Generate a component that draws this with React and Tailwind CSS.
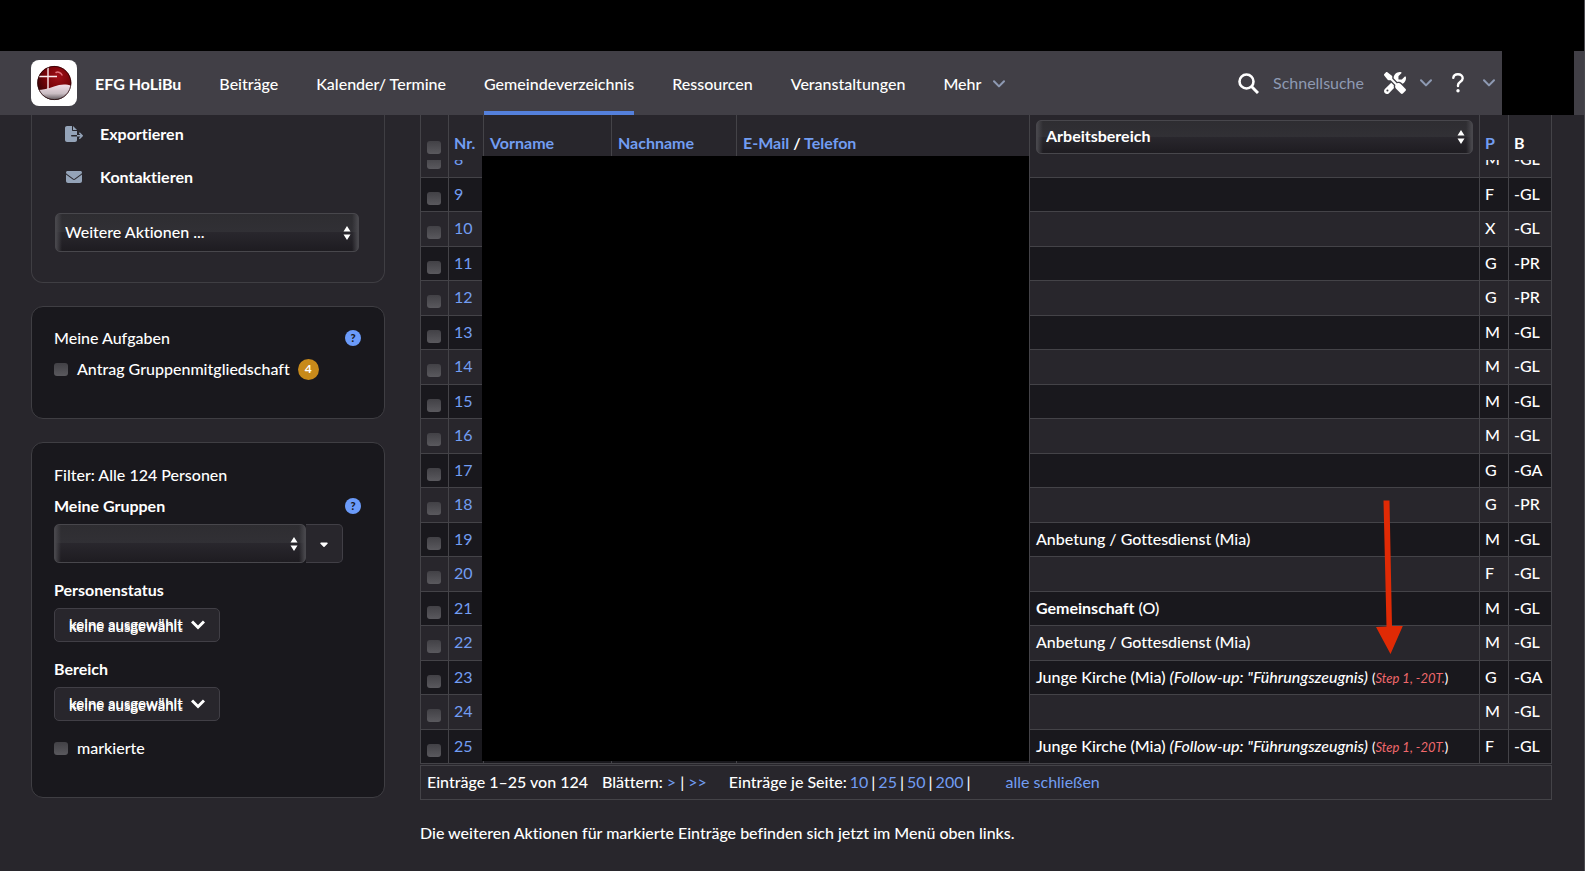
import { useState } from "react";
import { FaFileExport, FaEnvelope, FaScrewdriverWrench, FaCaretDown } from "react-icons/fa6";

const navItems = ["Beiträge", "Kalender/ Termine", "Gemeindeverzeichnis", "Ressourcen", "Veranstaltungen"];

const rows = [
    { nr: 9, p: "F", b: "-GL" },
    { nr: 10, p: "X", b: "-GL" },
    { nr: 11, p: "G", b: "-PR" },
    { nr: 12, p: "G", b: "-PR" },
    { nr: 13, p: "M", b: "-GL" },
    { nr: 14, p: "M", b: "-GL" },
    { nr: 15, p: "M", b: "-GL" },
    { nr: 16, p: "M", b: "-GL" },
    { nr: 17, p: "G", b: "-GA" },
    { nr: 18, p: "G", b: "-PR" },
    { nr: 19, area: "Anbetung / Gottesdienst", role: "(Mia)", p: "M", b: "-GL" },
    { nr: 20, p: "F", b: "-GL" },
    { nr: 21, area: "Gemeinschaft", role: "(O)", lead: true, p: "M", b: "-GL" },
    { nr: 22, area: "Anbetung / Gottesdienst", role: "(Mia)", p: "M", b: "-GL" },
    { nr: 23, area: "Junge Kirche", role: "(Mia)", followUp: true, p: "G", b: "-GA" },
    { nr: 24, p: "M", b: "-GL" },
    { nr: 25, area: "Junge Kirche", role: "(Mia)", followUp: true, p: "F", b: "-GL" },
];

const Chevron = () => (
    <svg viewBox="0 0 12 8" className="h-2 w-3 shrink-0" fill="none" stroke="#8e9ab3" strokeWidth="2" strokeLinecap="round" strokeLinejoin="round" aria-hidden="true">
        <path d="M1 1.2 6 6.4 11 1.2" />
    </svg>
);

const Logo = () => (
    <svg viewBox="0 0 46 46" className="size-[46px] shrink-0" role="img" aria-label="EFG HoLiBu">
        <defs>
            <radialGradient id="ball" cx="0.6" cy="0.3" r="0.75">
                <stop offset="0" stopColor="#a01018" />
                <stop offset="0.45" stopColor="#7c0409" />
                <stop offset="1" stopColor="#2a0204" />
            </radialGradient>
            <linearGradient id="snow" x1="0" y1="0" x2="0" y2="1">
                <stop offset="0" stopColor="#f3dfe8" />
                <stop offset="0.55" stopColor="#c9bcc2" />
                <stop offset="1" stopColor="#4a4246" />
            </linearGradient>
            <clipPath id="round">
                <circle cx="23.3" cy="23" r="17" />
            </clipPath>
        </defs>
        <rect width="46" height="46" rx="8" fill="#fff" />
        <g clipPath="url(#round)">
            <rect x="6" y="6" width="35" height="35" fill="url(#ball)" />
            <path d="M6 30C12 30 17 28.5 23 26.5C29 24.5 34 23.5 41 26V41H6Z" fill="url(#snow)" />
            <path d="M17 7V29M8 16.5H26" stroke="#fbe9ec" strokeWidth="1.4" />
            <path d="M25 12.5C27 11.5 30 12.5 31 15" fill="none" stroke="#e2727c" strokeWidth="1.5" strokeLinecap="round" />
        </g>
        <circle cx="23.3" cy="23" r="16.6" fill="none" stroke="#200305" strokeOpacity="0.7" strokeWidth="1" />
    </svg>
);

const HelpButton = ({ label }) => (
    <button type="button" aria-label={label} className="flex size-4 items-center justify-center rounded-full bg-[#6b9bfa] text-[11px] leading-4 font-black text-[#19181d]">
        ?
    </button>
);

const Checkbox = ({ id, label }) => (
    <input
        type="checkbox"
        id={id}
        aria-label={label}
        className="block h-[13px] w-3.5 shrink-0 appearance-none rounded-[3px] bg-linear-to-b from-[#424146] to-[#5a595e] checked:from-[#6b9bfa] checked:to-[#4f7cd8]"
    />
);

const Select = ({ id, label, children, height, bold }) => (
    <div className="relative w-full">
        <select
            id={id}
            aria-label={label}
            className={`block w-full appearance-none rounded-[5px] border border-[#48474c] bg-[linear-gradient(to_right,#49484d,transparent_6px,transparent_calc(100%-6px),#49484d),linear-gradient(to_bottom,#2e2d31,#313035_50%,#29272d_50%,#1e1c21)] px-[9px] pb-0.5 text-base ${height} ${bold ? "font-bold" : "font-medium"}`}
        >
            {children}
        </select>
        <svg viewBox="0 0 8 14" className="pointer-events-none absolute top-1/2 right-2 h-3.5 w-2 -translate-y-1/2" fill="#fff" aria-hidden="true">
            <path d="M4 0 7.5 5.5H.5ZM4 14 7.5 8.5H.5Z" />
        </svg>
    </div>
);

const MultiSelectButton = ({ id }) => (
    <button type="button" id={id} className="flex h-[34px] w-[166px] items-center justify-between rounded-[5px] border border-[#413f46] bg-[#28262c] px-3.5 text-[15px] font-medium">
        <span className="pb-px [text-shadow:0_2px_0_#fff]">keine ausgewählt</span>
        <svg viewBox="0 0 14 10" className="h-2.5 w-3.5" fill="none" stroke="#fff" strokeWidth="3" strokeLinejoin="miter" aria-hidden="true">
            <path d="M1 1.5 7 7.5 13 1.5" />
        </svg>
    </button>
);

const Header = () => (
    <header className="flex h-16 shrink-0 items-stretch bg-[#413f46] pl-[31px]">
        <a href="#" className="flex items-center gap-[18px] font-bold">
            <Logo />
            <span className="pt-0.5">EFG HoLiBu</span>
        </a>
        <nav className="ml-[38px] flex gap-[38px]">
            {navItems.map((item) => (
                <a
                    key={item}
                    href="#"
                    className={`flex items-center border-y-4 border-transparent pt-0.5 font-medium whitespace-nowrap ${item === "Gemeindeverzeichnis" ? "border-b-[#5480dc]" : ""}`}
                >
                    {item}
                </a>
            ))}
            <button type="button" className="flex items-center gap-3 pt-0.5 font-medium">
                Mehr <Chevron />
            </button>
        </nav>
        <div className="ml-auto flex items-center">
            <label htmlFor="quicksearch" aria-label="Schnellsuche">
                <svg viewBox="0 0 21 21" className="size-[21px]" fill="none" stroke="#fff" strokeWidth="2.6" aria-hidden="true">
                    <circle cx="8.5" cy="8.5" r="7" />
                    <path d="M13.5 13.5 20 20" strokeWidth="3" />
                </svg>
            </label>
            <input id="quicksearch" type="text" placeholder="Schnellsuche" className="ml-3.5 w-[111px] bg-transparent outline-none placeholder:text-[#8e9ab3]" />
            <button type="button" aria-label="Werkzeuge" className="flex items-center gap-3.5">
                <FaScrewdriverWrench className="size-[22px]" />
                <Chevron />
            </button>
            <button type="button" aria-label="Hilfe" className="ml-5 flex items-center gap-[19px]">
                <svg viewBox="0 0 12 20" className="h-5 w-3" fill="none" stroke="#fff" strokeWidth="2.4" strokeLinecap="round" strokeLinejoin="round" aria-hidden="true">
                    <path d="M1.3 4.8C1.6 2.6 3.2 1.3 5.9 1.3C8.8 1.3 10.7 2.9 10.7 5.3C10.7 8.8 6 8.6 6 12.2V13" />
                    <circle cx="6" cy="17.8" r="1.7" fill="#fff" stroke="none" />
                </svg>
                <Chevron />
            </button>
            <div className="ml-[7px] h-full w-[72px] bg-black" />
            <div className="w-2.5" />
        </div>
    </header>
);

const Sidebar = () => (
    <aside className="flex w-[354px] shrink-0 flex-col gap-[23px]">
        <section className="h-[168px] rounded-b-xl border border-t-0 border-[#3f3e43] pr-[25px] pl-[23px]">
            <a href="#" className="ml-2.5 flex h-[38px] items-center gap-[17px] font-bold">
                <FaFileExport className="size-[18px] text-[#94a3b8]" />
                Exportieren
            </a>
            <a href="#" className="ml-2.5 mt-[3px] flex h-[42px] items-center gap-[17px] font-bold">
                <span className="flex w-[18px] justify-center">
                    <FaEnvelope className="size-4 text-[#94a3b8]" />
                </span>
                Kontaktieren
            </a>
            <div className="mt-[15px]">
                <Select label="Weitere Aktionen" height="h-[39px]">
                    <option>Weitere Aktionen ...</option>
                </Select>
            </div>
        </section>

        <section className="h-[113px] rounded-xl border border-[#3f3e43] bg-[#19181d] pt-[19px] pr-[23px] pl-[22px] font-medium">
            <div className="flex h-6 items-center justify-between">
                <h2>Meine Aufgaben</h2>
                <HelpButton label="Hilfe zu Meine Aufgaben" />
            </div>
            <div className="mt-[7px] flex h-6 items-center">
                <Checkbox id="antrag" />
                <label htmlFor="antrag" className="ml-[9px]">Antrag Gruppenmitgliedschaft</label>
                <span className="ml-2 flex size-[21px] items-center justify-center rounded-full bg-[#c88a1a] text-xs font-bold">4</span>
            </div>
        </section>

        <section className="h-[356px] rounded-xl border border-[#3f3e43] bg-[#19181d] pt-5 pr-[23px] pl-[22px] font-medium">
            <h2 className="leading-6">Filter: Alle 124 Personen</h2>
            <div className="mt-[7px] flex h-6 items-center justify-between">
                <label htmlFor="gruppen" className="font-bold">Meine Gruppen</label>
                <HelpButton label="Hilfe zu Meine Gruppen" />
            </div>
            <div className="mt-1.5 flex">
                <div className="w-[252px]">
                    <Select id="gruppen" height="h-[39px]">
                        <option></option>
                    </Select>
                </div>
                <button type="button" aria-label="Gruppe auswählen" className="flex w-[37px] items-center justify-center rounded-r-[5px] border border-l-0 border-[#413f46] bg-[#28262c]">
                    <FaCaretDown className="size-3" />
                </button>
            </div>
            <label htmlFor="personenstatus" className="mt-[15px] block leading-6 font-bold">Personenstatus</label>
            <div className="mt-1.5">
                <MultiSelectButton id="personenstatus" />
            </div>
            <label htmlFor="bereich" className="mt-[15px] block leading-6 font-bold">Bereich</label>
            <div className="mt-1.5">
                <MultiSelectButton id="bereich" />
            </div>
            <div className="mt-[15px] flex h-6 items-center">
                <Checkbox id="markierte" />
                <label htmlFor="markierte" className="ml-[9px]">markierte</label>
            </div>
        </section>
    </aside>
);

const Arrow = () => (
    <svg viewBox="0 0 28 156" className="pointer-events-none absolute top-[385px] right-[149px] h-[156px] w-7" fill="#e02a05" aria-hidden="true">
        <path d="M8.5 0.5 14.5 0.5 17 126 27.8 126 15.5 154 1 127 11.5 126.5Z" />
    </svg>
);

const cell = "border-r border-[#444348] px-[5px] text-left";
const wideCell = "border-r border-[#444348] px-1.5 text-left";

const PeopleTable = () => (
    <div className="relative">
        <table className="w-full table-fixed border-separate border-spacing-0 border-l border-[#444348]">
            <colgroup>
                <col className="w-7" />
                <col className="w-[35px]" />
                <col className="w-32" />
                <col className="w-[125px]" />
                <col className="w-[293px]" />
                <col />
                <col className="w-[29px]" />
                <col className="w-[43px]" />
            </colgroup>
            <thead>
                <tr className="h-[45px] text-[#729df2]">
                    <th className={cell}><div className="pt-[19px] pl-px"><Checkbox label="Alle markieren" /></div></th>
                    <th className={`${cell} pt-2.5`}><a href="#">Nr.</a></th>
                    <th className={`${wideCell} pt-2.5`}><a href="#">Vorname</a></th>
                    <th className={`${wideCell} pt-2.5`}><a href="#">Nachname</a></th>
                    <th className={`${wideCell} pt-2.5`}><a href="#">E-Mail</a> <span className="text-white">/</span> <a href="#">Telefon</a></th>
                    <th className={`${wideCell} pt-[5px] align-top text-white`}>
                        <Select label="Spalte" height="h-[34px]" bold>
                            <option>Arbeitsbereich</option>
                        </Select>
                    </th>
                    <th className={`${cell} pt-2.5`}><a href="#">P</a></th>
                    <th className={`${cell} pt-2.5 text-white`}>B</th>
                </tr>
            </thead>
            <tbody>
                {/* row 8 has scrolled halfway under the header */}
                <tr className="font-medium">
                    <td className={`${cell} border-b`}><div className="flex h-[17px] items-start overflow-hidden pl-px"><span className="-mt-1"><Checkbox label="8 markieren" /></span></div></td>
                    <td className={`${cell} border-b font-normal text-[#729df2]`}><div className="flex h-[17px] items-end overflow-hidden pb-1.5"><a href="#">8</a></div></td>
                    <td className={`${cell} border-b`} />
                    <td className={`${cell} border-b`} />
                    <td className={`${cell} border-b`} />
                    <td className={`${cell} border-b`} />
                    <td className={`${cell} border-b`}><div className="flex h-[17px] items-end overflow-hidden pb-1.5">M</div></td>
                    <td className={`${cell} border-b`}><div className="flex h-[17px] items-end overflow-hidden pb-1.5">-GL</div></td>
                </tr>
                {rows.map((row) => (
                    <tr key={row.nr} className="font-medium odd:h-[35px] even:h-[34px] even:bg-[#19181d]">
                        <td className={`${cell} border-b`}><div className="pt-[7px] pl-px"><Checkbox label={`${row.nr} markieren`} /></div></td>
                        <td className={`${cell} border-b pb-0.5 font-normal text-[#729df2]`}><a href="#">{row.nr}</a></td>
                        <td className={`${cell} border-b`} />
                        <td className={`${cell} border-b`} />
                        <td className={`${cell} border-b`} />
                        <td className={`${wideCell} border-b pb-0.5`}>
                            {row.area && <><span className={row.lead ? "font-bold" : ""}>{row.area}</span> {row.role}</>}
                            {row.followUp && (
                                <>
                                    {" "}<i>(Follow-up: "Führungszeugnis)</i> <span className="text-[13px]">(<i className="font-normal text-[#f0686c]">Step 1, -20T.</i>)</span>
                                </>
                            )}
                        </td>
                        <td className={`${cell} border-b pb-0.5`}>{row.p}</td>
                        <td className={`${cell} border-b pb-0.5`}>{row.b}</td>
                    </tr>
                ))}
            </tbody>
        </table>
        <div className="absolute top-[41px] bottom-[3px] left-[62px] w-[547px] bg-black" />
        <Arrow />
    </div>
);

const Pager = () => {
    const [perPage, setPerPage] = useState(25);

    return (
        <div className="mt-px flex h-[35px] items-center border border-[#444348] px-1.5 pb-0.5 font-medium whitespace-nowrap">
            <span>Einträge 1–{perPage} von 124</span>
            <span className="ml-3.5">Blättern: <a href="#" className="font-normal text-[#729df2]">&gt;</a> | <a href="#" className="font-normal text-[#729df2]">&gt;&gt;</a></span>
            <span className="mr-[3px] ml-[22px]">Einträge je Seite:</span>
            {[10, 25, 50, 200].map((n) => (
                <span key={n} className="flex">
                    <button type="button" onClick={() => setPerPage(n)} className="font-normal text-[#729df2]">{n}</button>
                    <span className="mx-[3px]">|</span>
                </span>
            ))}
            <a href="#" className="ml-8 font-normal text-[#729df2]">alle schließen</a>
        </div>
    );
};

export default function App() {
    return (
        <div className="flex min-h-screen flex-col border-r border-[#4a494e] bg-[#28262c] font-[Lato,sans-serif] text-base text-white [font-variant-ligatures:none]">
            <div className="h-[51px] shrink-0 bg-black" />
            <Header />
            <div className="flex gap-[35px] pr-8 pl-[31px]">
                <Sidebar />
                <main className="min-w-0 flex-1">
                    <PeopleTable />
                    <Pager />
                    <p className="mt-[21px] leading-6 font-medium">Die weiteren Aktionen für markierte Einträge befinden sich jetzt im Menü oben links.</p>
                </main>
            </div>
        </div>
    );
}
